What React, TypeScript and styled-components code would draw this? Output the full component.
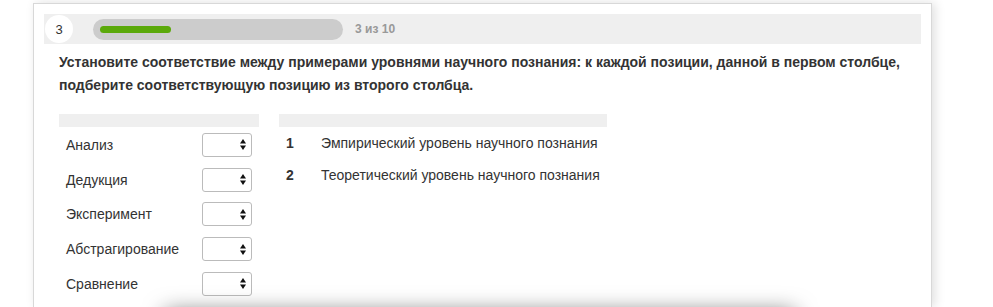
import React from "react";
import styled, { createGlobalStyle } from "styled-components";

const Global = createGlobalStyle`
  html, body { margin: 0; padding: 0; background: #fff; overflow: hidden; }
  body { font-family: "Liberation Sans", Arial, sans-serif; color: #333; }
`;

const Page = styled.div`
  position: relative;
  width: 993px;
  height: 307px;
  padding: 3px 0 0 33px;
  box-sizing: border-box;
  overflow: hidden;
`;

const Card = styled.div`
  width: 899px;
  height: 304px;
  box-sizing: border-box;
  border: 1px solid #d8d8d8;
  border-bottom: none;
  background: #fff;
  padding: 10px;
  box-shadow: 3px 0 10px rgba(0, 0, 0, 0.13);
`;

const Header = styled.div`
  display: flex;
  align-items: center;
  height: 30px;
  background: #efefef;
  padding-left: 1px;
`;

const Num = styled.div`
  width: 28px;
  height: 28px;
  border-radius: 50%;
  background: #fff;
  display: flex;
  align-items: center;
  justify-content: center;
  font-size: 13px;
  color: #333;
`;

const Track = styled.div`
  margin-left: 20px;
  width: 250px;
  height: 21px;
  border-radius: 11px;
  background: #cccccc;
  display: flex;
  align-items: center;
  padding-left: 7px;
  box-sizing: border-box;
`;

const Fill = styled.div`
  height: 7px;
  border-radius: 4px;
  background: #5ba90a;
`;

const Counter = styled.div`
  margin-left: 12px;
  font-size: 12px;
  font-weight: bold;
  color: #999;
`;

const Question = styled.div`
  margin: 7px 0 0 15px;
  font-size: 14px;
  font-weight: bold;
  line-height: 23px;
  color: #333;
`;

const Columns = styled.div`
  display: flex;
  gap: 20px;
  margin: 17px 0 0 15px;
`;

const Column = styled.div<{ $w: number }>`
  width: ${(p) => p.$w}px;
`;

const ColHead = styled.div`
  height: 13px;
  background: #efefef;
`;

const LeftRow = styled.div`
  display: flex;
  align-items: center;
  height: 34.75px;
  padding-top: 1px;
  box-sizing: border-box;
`;

const LeftLabel = styled.div`
  width: 136px;
  padding-left: 7px;
  font-size: 14px;
  color: #333;
`;

const Select = styled.div`
  width: 50px;
  height: 24px;
  box-sizing: border-box;
  border: 1px solid #bbb;
  border-radius: 3px;
  background: #fff;
  display: flex;
  align-items: center;
  justify-content: flex-end;
  padding-right: 5px;
`;

const RightRow = styled.div`
  display: flex;
  align-items: center;
  height: 32px;
  font-size: 14px;
  color: #333;
`;

const RightNum = styled.div`
  width: 42px;
  padding-left: 7px;
  box-sizing: border-box;
  font-weight: bold;
`;

const Shadow = styled.div`
  position: absolute;
  left: 165px;
  top: 312px;
  width: 630px;
  height: 60px;
  background: #fff;
  box-shadow: 0 0 22px rgba(0, 0, 0, 0.55);
`;

const Arrows = () => (
  <svg width="6" height="11" viewBox="0 0 6 11">
    <polygon points="3,0 6,4.5 0,4.5" fill="#111" />
    <polygon points="0,6.5 6,6.5 3,11" fill="#111" />
  </svg>
);

const left = ["Анализ", "Дедукция", "Эксперимент", "Абстрагирование", "Сравнение"];
const right = [
  "Эмпирический уровень научного познания",
  "Теоретический уровень научного познания",
];

export default function App() {
  const done = 3;
  const total = 10;
  return (
    <Page>
      <Global />
      <Card>
        <Header>
          <Num>{done}</Num>
          <Track>
            <Fill style={{ width: `${(done / total) * 236}px` }} />
          </Track>
          <Counter>
            {done} из {total}
          </Counter>
        </Header>
        <Question>
          Установите соответствие между примерами уровнями научного познания: к каждой позиции, данной в первом столбце,
          <br />
          подберите соответствующую позицию из второго столбца.
        </Question>
        <Columns>
          <Column $w={200}>
            <ColHead />
            {left.map((l) => (
              <LeftRow key={l}>
                <LeftLabel>{l}</LeftLabel>
                <Select>
                  <Arrows />
                </Select>
              </LeftRow>
            ))}
          </Column>
          <Column $w={328}>
            <ColHead />
            {right.map((r, i) => (
              <RightRow key={r}>
                <RightNum>{i + 1}</RightNum>
                {r}
              </RightRow>
            ))}
          </Column>
        </Columns>
      </Card>
      <Shadow />
    </Page>
  );
}
